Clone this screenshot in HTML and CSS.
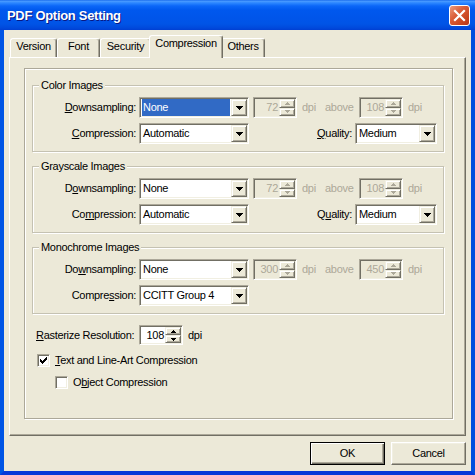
FILE: index.html
```html
<!DOCTYPE html>
<html>
<head>
<meta charset="utf-8">
<title>PDF Option Setting</title>
<link rel="stylesheet" href="styles.css">
</head>
<body>
<div class="window">
  <div class="titlebar">
    <span class="title">PDF Option Setting</span>
    <span class="close"><svg width="19" height="19" viewBox="0 0 19 19"><path d="M5 5L14 14M14 5L5 14" stroke="#fff" stroke-width="2.2" stroke-linecap="square"/></svg></span>
  </div>
  <div class="client">
    <div class="tabs">
      <div class="tab t-version">Version</div>
      <div class="tab t-font">Font</div>
      <div class="tab t-security">Security</div>
      <div class="tab t-comp active">Compression</div>
      <div class="tab t-others">Others</div>
    </div>
    <div class="panel">
      <div class="frame">
        <fieldset class="group">
          <legend>Color Images</legend>
          <div class="row">
            <span class="lbl"><u>D</u>ownsampling:</span>
            <div class="combo"><span class="val"><span class="hl">None</span></span><span class="drop"><svg width="7" height="4" viewBox="0 0 7 4"><rect x="0" y="0" width="7" height="1"/><rect x="1" y="1" width="5" height="1"/><rect x="2" y="2" width="3" height="1"/><rect x="3" y="3" width="1" height="1"/></svg></span></div>
            <div class="spin dis"><span class="num">72</span><span class="arrows"><i><svg width="5" height="3" viewBox="0 0 5 3"><rect x="2" y="0" width="1" height="1"/><rect x="1" y="1" width="3" height="1"/><rect x="0" y="2" width="5" height="1"/></svg></i><i><svg width="5" height="3" viewBox="0 0 5 3"><rect x="0" y="0" width="5" height="1"/><rect x="1" y="1" width="3" height="1"/><rect x="2" y="2" width="1" height="1"/></svg></i></span></div>
            <span class="unit dis">dpi</span>
            <span class="above dis">above</span>
            <div class="spin dis"><span class="num">108</span><span class="arrows"><i><svg width="5" height="3" viewBox="0 0 5 3"><rect x="2" y="0" width="1" height="1"/><rect x="1" y="1" width="3" height="1"/><rect x="0" y="2" width="5" height="1"/></svg></i><i><svg width="5" height="3" viewBox="0 0 5 3"><rect x="0" y="0" width="5" height="1"/><rect x="1" y="1" width="3" height="1"/><rect x="2" y="2" width="1" height="1"/></svg></i></span></div>
            <span class="unit dis">dpi</span>
          </div>
          <div class="row">
            <span class="lbl"><u>C</u>ompression:</span>
            <div class="combo"><span class="val">Automatic</span><span class="drop"><svg width="7" height="4" viewBox="0 0 7 4"><rect x="0" y="0" width="7" height="1"/><rect x="1" y="1" width="5" height="1"/><rect x="2" y="2" width="3" height="1"/><rect x="3" y="3" width="1" height="1"/></svg></span></div>
            <span class="qlbl"><u>Q</u>uality:</span>
            <div class="combo small"><span class="val">Medium</span><span class="drop"><svg width="7" height="4" viewBox="0 0 7 4"><rect x="0" y="0" width="7" height="1"/><rect x="1" y="1" width="5" height="1"/><rect x="2" y="2" width="3" height="1"/><rect x="3" y="3" width="1" height="1"/></svg></span></div>
          </div>
        </fieldset>

        <fieldset class="group">
          <legend>Grayscale Images</legend>
          <div class="row">
            <span class="lbl">D<u>o</u>wnsampling:</span>
            <div class="combo"><span class="val">None</span><span class="drop"><svg width="7" height="4" viewBox="0 0 7 4"><rect x="0" y="0" width="7" height="1"/><rect x="1" y="1" width="5" height="1"/><rect x="2" y="2" width="3" height="1"/><rect x="3" y="3" width="1" height="1"/></svg></span></div>
            <div class="spin dis"><span class="num">72</span><span class="arrows"><i><svg width="5" height="3" viewBox="0 0 5 3"><rect x="2" y="0" width="1" height="1"/><rect x="1" y="1" width="3" height="1"/><rect x="0" y="2" width="5" height="1"/></svg></i><i><svg width="5" height="3" viewBox="0 0 5 3"><rect x="0" y="0" width="5" height="1"/><rect x="1" y="1" width="3" height="1"/><rect x="2" y="2" width="1" height="1"/></svg></i></span></div>
            <span class="unit dis">dpi</span>
            <span class="above dis">above</span>
            <div class="spin dis"><span class="num">108</span><span class="arrows"><i><svg width="5" height="3" viewBox="0 0 5 3"><rect x="2" y="0" width="1" height="1"/><rect x="1" y="1" width="3" height="1"/><rect x="0" y="2" width="5" height="1"/></svg></i><i><svg width="5" height="3" viewBox="0 0 5 3"><rect x="0" y="0" width="5" height="1"/><rect x="1" y="1" width="3" height="1"/><rect x="2" y="2" width="1" height="1"/></svg></i></span></div>
            <span class="unit dis">dpi</span>
          </div>
          <div class="row">
            <span class="lbl">Co<u>m</u>pression:</span>
            <div class="combo"><span class="val">Automatic</span><span class="drop"><svg width="7" height="4" viewBox="0 0 7 4"><rect x="0" y="0" width="7" height="1"/><rect x="1" y="1" width="5" height="1"/><rect x="2" y="2" width="3" height="1"/><rect x="3" y="3" width="1" height="1"/></svg></span></div>
            <span class="qlbl">Q<u>u</u>ality:</span>
            <div class="combo small"><span class="val">Medium</span><span class="drop"><svg width="7" height="4" viewBox="0 0 7 4"><rect x="0" y="0" width="7" height="1"/><rect x="1" y="1" width="5" height="1"/><rect x="2" y="2" width="3" height="1"/><rect x="3" y="3" width="1" height="1"/></svg></span></div>
          </div>
        </fieldset>

        <fieldset class="group">
          <legend>Monochrome Images</legend>
          <div class="row">
            <span class="lbl">Do<u>w</u>nsampling:</span>
            <div class="combo"><span class="val">None</span><span class="drop"><svg width="7" height="4" viewBox="0 0 7 4"><rect x="0" y="0" width="7" height="1"/><rect x="1" y="1" width="5" height="1"/><rect x="2" y="2" width="3" height="1"/><rect x="3" y="3" width="1" height="1"/></svg></span></div>
            <div class="spin dis"><span class="num">300</span><span class="arrows"><i><svg width="5" height="3" viewBox="0 0 5 3"><rect x="2" y="0" width="1" height="1"/><rect x="1" y="1" width="3" height="1"/><rect x="0" y="2" width="5" height="1"/></svg></i><i><svg width="5" height="3" viewBox="0 0 5 3"><rect x="0" y="0" width="5" height="1"/><rect x="1" y="1" width="3" height="1"/><rect x="2" y="2" width="1" height="1"/></svg></i></span></div>
            <span class="unit dis">dpi</span>
            <span class="above dis">above</span>
            <div class="spin dis"><span class="num">450</span><span class="arrows"><i><svg width="5" height="3" viewBox="0 0 5 3"><rect x="2" y="0" width="1" height="1"/><rect x="1" y="1" width="3" height="1"/><rect x="0" y="2" width="5" height="1"/></svg></i><i><svg width="5" height="3" viewBox="0 0 5 3"><rect x="0" y="0" width="5" height="1"/><rect x="1" y="1" width="3" height="1"/><rect x="2" y="2" width="1" height="1"/></svg></i></span></div>
            <span class="unit dis">dpi</span>
          </div>
          <div class="row">
            <span class="lbl">Compre<u>s</u>sion:</span>
            <div class="combo"><span class="val">CCITT Group 4</span><span class="drop"><svg width="7" height="4" viewBox="0 0 7 4"><rect x="0" y="0" width="7" height="1"/><rect x="1" y="1" width="5" height="1"/><rect x="2" y="2" width="3" height="1"/><rect x="3" y="3" width="1" height="1"/></svg></span></div>
          </div>
        </fieldset>

        <div class="raster">
          <span class="rlbl"><u>R</u>asterize Resolution:</span>
          <div class="spin short"><span class="num">108</span><span class="arrows"><i><svg width="5" height="3" viewBox="0 0 5 3"><rect x="2" y="0" width="1" height="1"/><rect x="1" y="1" width="3" height="1"/><rect x="0" y="2" width="5" height="1"/></svg></i><i><svg width="5" height="3" viewBox="0 0 5 3"><rect x="0" y="0" width="5" height="1"/><rect x="1" y="1" width="3" height="1"/><rect x="2" y="2" width="1" height="1"/></svg></i></span></div>
          <span class="unit">dpi</span>
        </div>

        <div class="check">
          <span class="cb"><svg width="7" height="7" viewBox="0 0 7 7"><rect x="0" y="2" width="1" height="3"/><rect x="1" y="3" width="1" height="3"/><rect x="2" y="4" width="1" height="3"/><rect x="3" y="3" width="1" height="3"/><rect x="4" y="2" width="1" height="3"/><rect x="5" y="1" width="1" height="3"/><rect x="6" y="0" width="1" height="3"/></svg></span>
          <span class="ctext"><u>T</u>ext and Line-Art Compression</span>
        </div>
        <div class="check sub">
          <span class="cb"></span>
          <span class="ctext">O<u>b</u>ject Compression</span>
        </div>
      </div>
    </div>
    <div class="buttons">
      <div class="btn def">OK</div>
      <div class="btn">Cancel</div>
    </div>
  </div>
</div>
</body>
</html>
```

FILE: styles.css
```css
* { box-sizing: border-box; }

html, body {
  margin: 0;
  padding: 0;
  width: 475px;
  height: 475px;
  overflow: hidden;
  background: #ECE9D8;
}

body {
  font: 11px/13px "Liberation Sans", Arial, sans-serif;
  letter-spacing: -0.3px;
  color: #000;
}

.window {
  width: 475px;
  height: 475px;
  display: flex;
  flex-direction: column;
}

.titlebar {
  flex: 0 0 30px;
  height: 30px;
  display: flex;
  align-items: center;
  justify-content: space-between;
  padding: 1px 5px 0 7px;
  background: linear-gradient(180deg,
    #0A5DE8 0px, #4D9DFF 1px, #2B86FF 3px, #0B66F8 6px,
    #0058EE 10px, #0055EA 18px, #0054E6 24px, #0049DC 28px, #003FD2 30px);
}

.title {
  color: #fff;
  font: bold 13px/15px "Liberation Sans", Arial, sans-serif;
  letter-spacing: -0.3px;
  text-shadow: 1px 1px 0 #0A1883;
}

.close {
  width: 21px;
  height: 21px;
  margin-top: -1px;
  border: 1px solid #fff;
  border-radius: 3px;
  background: linear-gradient(135deg, #EC9B7E 0%, #DA5D38 40%, #C9451F 75%, #B8361A 100%);
  display: flex;
  align-items: center;
  justify-content: center;
}

.client {
  flex: 1;
  display: flex;
  flex-direction: column;
  background: #ECE9D8;
  border-left: 4px solid #0055E5;
  border-right: 4px solid #0050DE;
  border-bottom: 4px solid #0838D8;
}

/* Tabs */
.tabs {
  flex: 0 0 27px;
  height: 27px;
  display: flex;
  align-items: flex-end;
  padding-left: 6px;
}

.tab {
  height: 19px;
  padding-top: 1px;
  text-align: center;
  white-space: nowrap;
  border: 1px solid;
  border-color: #fff #716F64 transparent #fff;
  border-bottom: 0;
  box-shadow: inset -1px 0 0 #ACA899;
  border-radius: 3px 3px 0 0;
  background: #ECE9D8;
}

.t-version { width: 47px; }
.t-font { width: 43px; }
.t-security { width: 51px; }
.t-comp { width: 70px; }
.t-others { width: 44px; }

.tab.active {
  width: 74px;
  height: 23px;
  margin: 0 -2px -1px -2px;
  position: relative;
  z-index: 1;
}

/* Panel */
.panel {
  margin: 0 5px;
  height: 379px;
  flex: 0 0 379px;
  border: 1px solid;
  border-color: #fff #716F64 #716F64 #fff;
  box-shadow: inset -1px -1px 0 #ACA899;
  padding: 10px 0 0 14px;
}

.frame {
  width: 429px;
  height: 351px;
  border: 1px solid #ACA899;
  box-shadow: inset 1px 1px 0 #fff, 1px 1px 0 #fff;
  padding: 10px 0 0 7px;
  display: flex;
  flex-direction: column;
}

.group {
  margin: 0;
  padding: 5px 0 7px 0;
  width: 412px;
  min-width: 0;
  border: 1px solid #C5C2B2;
  box-shadow: inset 1px 1px 0 #fff, 1px 1px 0 #fff;
}

.group + .group { margin-top: 8px; }

.group legend {
  margin-left: 6px;
  padding: 0 2px;
  line-height: 13px;
  background: #ECE9D8;
}

.row {
  display: flex;
  align-items: center;
  height: 21px;
}

.row + .row { margin-top: 5px; }

.lbl {
  flex: 0 0 103px;
  width: 103px;
  text-align: right;
  margin-right: 3px;
  white-space: nowrap;
}

.qlbl {
  flex: 0 0 103px;
  width: 103px;
  text-align: right;
  margin-right: 3px;
  white-space: nowrap;
}

/* Combo box */
.combo {
  flex: none;
  width: 110px;
  height: 21px;
  display: flex;
  border: 1px solid;
  border-color: #ACA899 #fff #fff #ACA899;
  box-shadow: inset 1px 1px 0 #716F64, inset -1px -1px 0 #F1EFE2;
  padding: 1px;
  background: #fff;
}

.combo.small { width: 82px; }

.val {
  flex: 1;
  display: flex;
  align-items: stretch;
  padding-left: 2px;
  line-height: 17px;
  white-space: nowrap;
  overflow: hidden;
}

.hl {
  flex: 1;
  margin: 0 1px 0 -1px;
  padding-left: 1px;
  background: #316AC5;
  color: #fff;
}

.drop {
  flex: 0 0 16px;
  width: 16px;
  height: 17px;
  border: 1px solid;
  border-color: #F1EFE2 #716F64 #716F64 #F1EFE2;
  box-shadow: inset 1px 1px 0 #fff, inset -1px -1px 0 #ACA899;
  background: #ECE9D8;
  display: flex;
  align-items: center;
  justify-content: center;
}

.drop svg { fill: #000; display: block; margin-top: 1px; }

/* Spin box */
.spin {
  flex: none;
  width: 44px;
  height: 21px;
  display: flex;
  border: 1px solid;
  border-color: #ACA899 #fff #fff #ACA899;
  box-shadow: inset 1px 1px 0 #716F64, inset -1px -1px 0 #F1EFE2;
  padding: 1px;
  background: #fff;
  margin-left: 4px;
}

.spin.dis {
  background: #ECE9D8;
  color: #ACA899;
}

.num {
  flex: 1;
  text-align: right;
  padding-right: 1px;
  line-height: 17px;
}

.arrows {
  flex: 0 0 16px;
  width: 16px;
  display: flex;
  flex-direction: column;
}

.arrows i {
  flex: 1;
  display: flex;
  align-items: center;
  justify-content: center;
  border: 1px solid;
  border-color: #F1EFE2 #716F64 #716F64 #F1EFE2;
  box-shadow: inset 1px 1px 0 #fff, inset -1px -1px 0 #ACA899;
  background: #ECE9D8;
}

.arrows svg { display: block; fill: #000; }
.spin.dis .arrows svg { fill: #ACA899; }

.unit {
  flex: none;
  width: 28px;
  padding-left: 5px;
}

.above {
  flex: none;
  width: 30px;
}

.dis { color: #ACA899; }

/* Rasterize row */
.raster {
  display: flex;
  align-items: center;
  height: 20px;
  margin-top: 11px;
  padding-left: 4px;
}

.rlbl {
  flex: 0 0 100px;
  width: 100px;
  margin-right: -1px;
  white-space: nowrap;
}

.spin.short { height: 20px; }

/* Checkboxes */
.check {
  display: flex;
  align-items: center;
  height: 13px;
  margin-top: 9px;
  padding-left: 5px;
}

.check.sub { padding-left: 23px; }

.cb {
  flex: none;
  width: 13px;
  height: 13px;
  border: 1px solid;
  border-color: #ACA899 #fff #fff #ACA899;
  box-shadow: inset 1px 1px 0 #716F64, inset -1px -1px 0 #F1EFE2;
  background: #fff;
  padding: 2px;
}

.cb svg { display: block; fill: #000; }

.ctext {
  margin-left: 5px;
  white-space: nowrap;
}

/* Buttons */
.buttons {
  display: flex;
  justify-content: flex-end;
  gap: 6px;
  padding: 6px 5px 0 0;
}

.btn {
  width: 75px;
  height: 23px;
  line-height: 21px;
  text-align: center;
  border: 1px solid;
  border-color: #fff #716F64 #716F64 #fff;
  box-shadow: inset -1px -1px 0 #ACA899, inset 1px 1px 0 #F1EFE2;
  background: #ECE9D8;
}

.btn.def {
  border: 1px solid #000;
  box-shadow: inset 1px 1px 0 #fff, inset -1px -1px 0 #716F64, inset -2px -2px 0 #ACA899;
}
```
